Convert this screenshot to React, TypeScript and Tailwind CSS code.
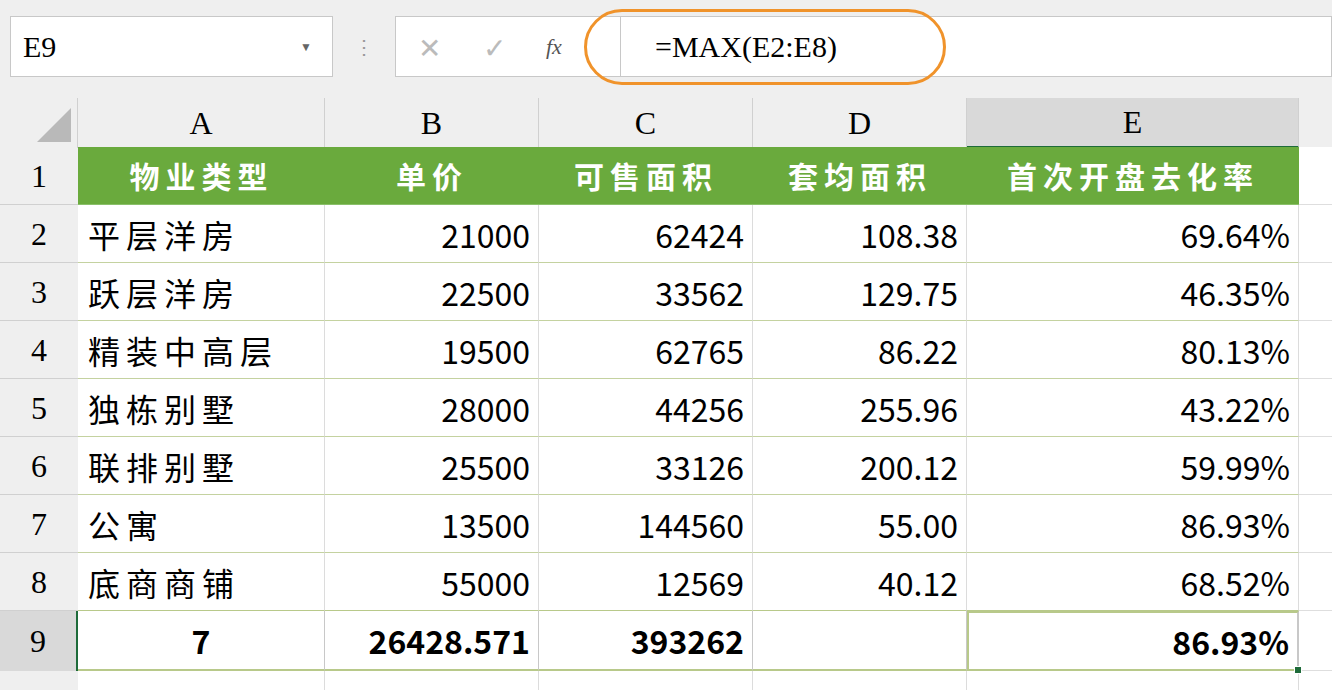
import React from 'react';

const cols = ['A', 'B', 'C', 'D', 'E'];
const head = ['物业类型', '单价', '可售面积', '套均面积', '首次开盘去化率'];
const rows = [
  ['平层洋房', '21000', '62424', '108.38', '69.64%'],
  ['跃层洋房', '22500', '33562', '129.75', '46.35%'],
  ['精装中高层', '19500', '62765', '86.22', '80.13%'],
  ['独栋别墅', '28000', '44256', '255.96', '43.22%'],
  ['联排别墅', '25500', '33126', '200.12', '59.99%'],
  ['公寓', '13500', '144560', '55.00', '86.93%'],
  ['底商商铺', '55000', '12569', '40.12', '68.52%'],
];
const cjk = { fontFamily: '"Noto Sans CJK SC", sans-serif' };
const serif = { fontFamily: '"Liberation Serif", "Noto Sans CJK SC", serif' };
const grid = 'grid grid-cols-[78px_247px_214px_214px_214px_332px_1fr]';

export default function App() {
  return (
    <div className="w-[1332px] h-[690px] overflow-hidden bg-white text-black">
      <div className="h-[98px] bg-[#efefef] flex items-start pt-4 pl-[10px] relative">
        <div className="w-[323px] h-[61px] bg-white border border-[#c8c8c8] flex items-center px-3 justify-between">
          <span className="text-[30px]" style={serif}>E9</span>
          <span className="text-[#666] text-[12px] mr-2">▼</span>
        </div>
        <div className="w-[62px] h-[61px] flex items-center justify-center text-[#999] text-[20px]">⋮</div>
        <div className="w-[225px] h-[61px] bg-white border border-[#c8c8c8] border-r-0 flex items-center text-[28px] text-[#bbb]">
          <span className="ml-[22px]">✕</span>
          <span className="ml-[42px]">✓</span>
          <span className="ml-[40px] text-[#555] text-[22px] italic" style={serif}>fx</span>
        </div>
        <div className="flex-1 h-[61px] bg-white border border-[#c8c8c8] flex items-center pl-[34px] text-[30px]" style={serif}>
          =MAX(E2:E8)
        </div>
        <div className="absolute left-[584px] top-[9px] w-[362px] h-[76px] rounded-[38px] border-[3px] border-[#f0932b]" />
      </div>
      <div className={`${grid} h-[49px] bg-[#efefef]`}>
        <div className="relative border-r border-[#d0d0d0] bg-[#efefef]">
          <div className="absolute right-[6px] bottom-[6px] w-0 h-0 border-l-[34px] border-l-transparent border-b-[34px] border-b-[#b9b9b9]" />
        </div>
        {cols.map((c) => (
          <div key={c} className={`flex items-center justify-center text-[32px] border-r border-[#d0d0d0] ${c === 'E' ? 'bg-[#d9d9d9] border-b-2 border-b-[#1e6b3a]' : ''}`} style={serif}>{c}</div>
        ))}
        <div />
      </div>
      <div className={`${grid} h-[58px]`}>
        <div className="bg-[#efefef] flex items-center justify-center text-[32px] border-b border-[#d0d0d0]" style={serif}>1</div>
        {head.map((h, i) => (
          <div key={i} className="bg-[#6aaa3d] text-white font-bold text-[30px] flex items-center justify-center tracking-[6px] border-b border-[#8ac06a]" style={cjk}>{h}</div>
        ))}
        <div className="border-b border-[#dedede]" />
      </div>
      {rows.map((r, ri) => (
        <div key={ri} className={`${grid} h-[58px]`}>
          <div className="bg-[#efefef] flex items-center justify-center text-[32px] border-b border-[#d0d0d0]" style={serif}>{ri + 2}</div>
          {r.map((v, i) => (
            <div key={i} className={`flex items-center text-[32px] border-b ${ri === 6 ? 'border-[#b8c98a]' : 'border-[#c4d2a0]'} border-r border-r-[#dcdcdc] ${i === 0 ? 'pl-[10px] tracking-[6px]' : 'justify-end pr-[8px]'}`} style={cjk}>{v}</div>
          ))}
          <div className="border-b border-[#dedede]" />
        </div>
      ))}
      <div className={`${grid} h-[60px]`}>
        <div className="bg-[#d9d9d9] flex items-center justify-center text-[32px] border-r-2 border-r-[#1e6b3a]" style={serif}>9</div>
        {['7', '26428.571', '393262', '', '86.93%'].map((v, i) => (
          <div key={i} className={`relative flex items-center font-bold text-[32px] border-b-2 border-[#b8c98a] border-r border-r-[#c8c8c8] ${i === 0 ? 'justify-center' : 'justify-end pr-[8px]'} ${i === 4 ? 'border-2 border-[#1e6b3a] border-r-2 border-r-[#1e6b3a]' : ''}`} style={cjk}>
            {v}
            {i === 4 && <div className="absolute -right-[5px] -bottom-[5px] w-[8px] h-[8px] bg-[#1e6b3a] border border-white" />}
          </div>
        ))}
        <div className="border-b border-[#dedede]" />
      </div>
      <div className={`${grid} h-[30px]`}>
        <div className="bg-[#efefef]" />
        {cols.map((c) => <div key={c} className="border-r border-[#dcdcdc]" />)}
      </div>
    </div>
  );
}
